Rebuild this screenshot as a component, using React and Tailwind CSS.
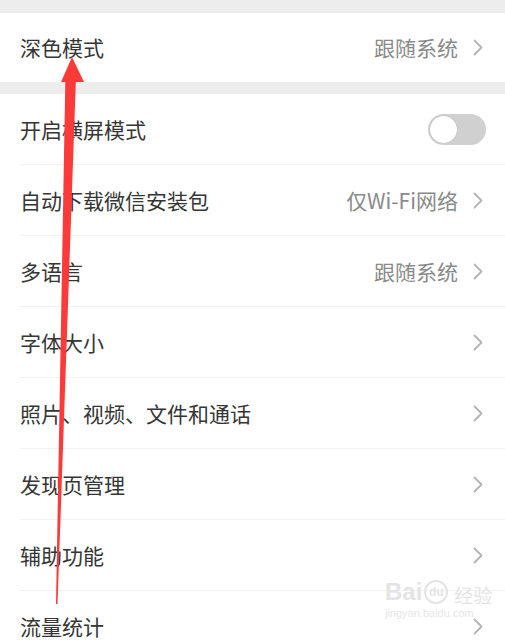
import React from 'react';

const rows = [
  { title: '开启横屏模式', toggle: true },
  { title: '自动下载微信安装包', value: '仅Wi-Fi网络' },
  { title: '多语言', value: '跟随系统' },
  { title: '字体大小' },
  { title: '照片、视频、文件和通话' },
  { title: '发现页管理' },
  { title: '辅助功能' },
  { title: '流量统计' },
];

const Chevron = () => (
  <svg width="10" height="17" viewBox="0 0 10 17" className="shrink-0">
    <polyline
      points="1.5,1.5 8.5,8.5 1.5,15.5"
      fill="none"
      stroke="#b4b4b4"
      strokeWidth="1.8"
      strokeLinecap="round"
      strokeLinejoin="round"
    />
  </svg>
);

const Toggle = () => (
  <div className="w-[58px] h-[31px] rounded-full bg-[#d0d0d0] p-[2px] flex items-center mr-[-3px]">
    <div className="w-[27px] h-[27px] rounded-full bg-white shadow-[0_0_1px_rgba(0,0,0,0.25)]" />
  </div>
);

const Row = ({ title, value, toggle, last }) => (
  <div className="pl-[20px] bg-white">
    <div
      className={`h-[71px] flex items-center justify-between pr-[22px] ${
        last ? '' : 'border-b border-[#f1f1f1]'
      }`}
    >
      <span className="text-[21px] text-[#353535] leading-none">{title}</span>
      {toggle ? (
        <Toggle />
      ) : (
        <div className="flex items-center gap-[15px]">
          {value && <span className="text-[21px] text-[#8a8a8a] leading-none">{value}</span>}
          <Chevron />
        </div>
      )}
    </div>
  </div>
);

const App = () => {
  return (
    <div className="relative w-[505px] h-[640px] overflow-hidden bg-[#ededed] font-['Noto_Sans_CJK_SC','Noto_Sans',sans-serif]">
      <div className="h-[13px]" />
      <div className="bg-white h-[69px] pl-[20px] pr-[22px] flex items-center justify-between">
        <span className="text-[21px] text-[#353535] leading-none">深色模式</span>
        <div className="flex items-center gap-[15px]">
          <span className="text-[21px] text-[#8a8a8a] leading-none">跟随系统</span>
          <Chevron />
        </div>
      </div>
      <div className="h-[12px]" />
      <div className="bg-white">
        {rows.map((r, i) => (
          <Row key={r.title} {...r} last={i === rows.length - 1} />
        ))}
      </div>

      {/* Baidu watermark */}
      <div className="absolute left-[385px] top-[580px] flex flex-col items-start pointer-events-none">
        <div className="flex items-end gap-[2px] text-[#e4e4e4] leading-none">
          <span className="text-[24px] font-bold font-['Liberation_Sans',sans-serif]">Bai</span>
          <span className="w-[24px] h-[24px] rounded-full border-2 border-[#e4e4e4] text-[12px] font-bold flex items-center justify-center font-['Liberation_Sans',sans-serif]">du</span>
          <span className="text-[19px] ml-[4px]">经验</span>
        </div>
        <span className="text-[11px] text-[#e6e6e6] mt-[4px] font-['Liberation_Sans',sans-serif] leading-none">jingyan.baidu.com</span>
      </div>

      {/* red arrow annotation */}
      <svg className="absolute left-0 top-0 pointer-events-none" width="505" height="640">
        <polygon
          points="72,57 84,82 75.8,82 57.5,604 56,604 65.3,82 61,82"
          fill="#fd3a3a"
        />
      </svg>
    </div>
  );
};

export default App;
